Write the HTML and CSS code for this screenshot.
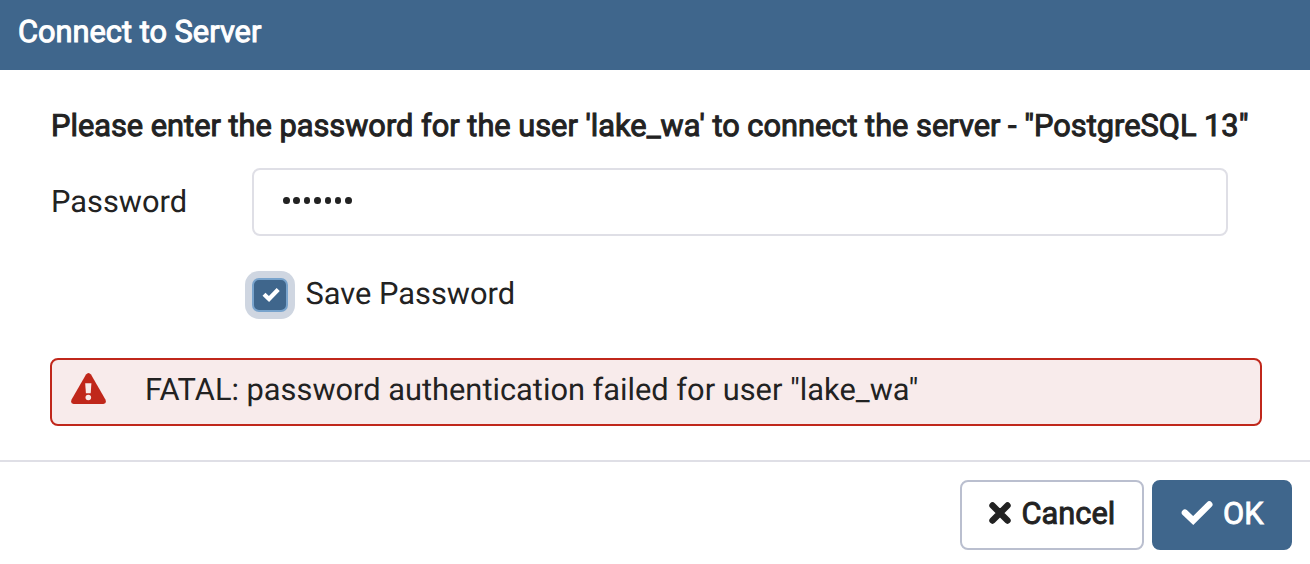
FILE: index.html
```html
<!DOCTYPE html>
<html lang="en">
<head>
<meta charset="utf-8">
<title>Connect to Server</title>
<link rel="stylesheet" href="styles.css">
</head>
<body>
<div class="dialog">
  <header class="dialog-header"><span class="title">Connect to Server</span></header>
  <main class="dialog-body">
    <div class="prompt"><span>Please enter the password for the user 'lake_wa' to connect the server - "PostgreSQL 13"</span></div>
    <div class="field">
      <label class="label">Password</label>
      <div class="input"><i></i><i></i><i></i><i></i><i></i><i></i><i></i></div>
    </div>
    <div class="save">
      <span class="focus-ring"><span class="checkbox"><svg viewBox="0 0 18 15"><path d="M2 7.300l5 4.700L16.200 2.500" fill="none" stroke="currentColor" stroke-width="4.300"/></svg></span></span>
      <span class="save-label">Save Password</span>
    </div>
    <div class="alert">
      <svg class="warn" viewBox="0 0 35 31"><path d="M15 1.500q2.500-3 5 0L34.400 26.500q1.600 4.200-2 4.500H2.600q-3.600-.3-2-4.500z"/><path class="mark" d="M14.200 10.300h6.200l-.7 10h-4.800z"/><circle class="mark" cx="17.300" cy="24.500" r="2.800"/></svg>
      <span class="alert-text">FATAL: password authentication failed for user "lake_wa"</span>
    </div>
  </main>
  <footer class="dialog-footer">
    <button class="btn cancel"><svg class="times" viewBox="0 0 22 22"><path d="M3.500 3.500l15 15m0-15l-15 15" fill="none" stroke="currentColor" stroke-width="6.400" stroke-linecap="round"/></svg><span>Cancel</span></button>
    <button class="btn ok"><svg class="tick" viewBox="0 0 32 24"><path d="M3.900 11.700l8.300 7.800L28.300 3.500" fill="none" stroke="currentColor" stroke-width="6.400" stroke-linecap="round" stroke-linejoin="miter"/></svg><span>OK</span></button>
  </footer>
</div>
</body>
</html>
```
FILE: styles.css
```css
* { box-sizing: border-box; }
body { margin: 0; background: #fff; color: #222; font: 30.8px/36px Roboto, sans-serif; text-rendering: geometricPrecision; }
svg { fill: currentColor; display: block; flex: none; }
.dialog { height: 564px; display: flex; flex-direction: column; overflow: hidden; white-space: nowrap; }
.dialog-header { height: 70px; padding: 14px 18px; background: #3f668c; color: #fff; font-size: 30.770px; -webkit-text-stroke: 1px currentColor; }
.dialog-body { height: 390px; padding: 38px 48px 0 50px; }
.prompt { height: 36px; padding-left: 1px; font-size: 30.770px; -webkit-text-stroke: 1px currentColor; }
.field { display: flex; height: 68px; margin-top: 24px; }
.label { width: 202px; padding-left: 1px; line-height: 67px; }
.input { width: 976px; height: 68px; border: 2px solid #dfdfe6; border-radius: 8px; padding: 27px 0 0 29px; display: flex; gap: 3.9px; }
.input i { width: 6.500px; height: 7px; border-radius: 50%; background: #222; }
.save { display: flex; height: 48px; margin: 35px 0 0 195px; }
.focus-ring { width: 50px; height: 48px; padding: 7px; border-radius: 14px; background: #cfd6e1; }
.checkbox { width: 36px; height: 34px; border: 2px solid #78a3cc; border-radius: 7px; background: #3f668c; color: #fff; display: flex; align-items: center; justify-content: center; padding: 0 0 1px 1px; }
.checkbox svg { width: 18px; height: 15px; }
.save-label { margin-left: 10.500px; line-height: 46px; }
.alert { display: flex; height: 68px; margin-top: 39px; border: 2px solid #c0271b; border-radius: 8px; background: #f8ebeb; padding: 0 19px; }
.warn { width: 35px; height: 31px; margin-top: 13px; color: #c0271b; }
.mark { fill: #f8ebeb; }
.alert-text { margin-left: 39px; line-height: 60px; }
.dialog-footer { height: 104px; border-top: 2px solid #dfdfe6; padding: 18px; display: flex; justify-content: flex-end; gap: 8px; }
.btn { height: 70px; border: 2px solid #babfcf; border-radius: 8px; background: #fff; color: #222; padding: 0 0 2px 26px; display: flex; align-items: center; font: inherit; }
.btn span { -webkit-text-stroke: .9px currentColor; }
.cancel { width: 184px; }
.ok { width: 140px; background: #3f668c; border-color: #3f668c; color: #fff; }
.times { width: 22px; height: 22px; margin: 0 10.500px 2px 1px; }
.tick { width: 32px; height: 24px; margin: 0 10.500px 2px .5px; }
```
